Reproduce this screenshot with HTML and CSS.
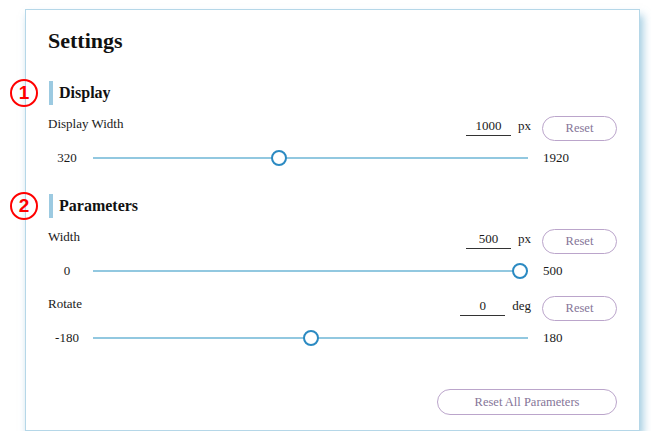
FILE: index.html
```html
<!DOCTYPE html>
<html lang="en">
<head>
    <meta charset="UTF-8">
    <meta name="viewport" content="width=device-width, initial-scale=1.0">
    <title>Settings</title>
    <link rel="stylesheet" href="styles.css">
</head>
<body>

    <div class="panel">
        <h1 class="title">Settings</h1>

        <!-- Display section -->
        <h2 class="section-title">
            <span class="marker">1</span>
            Display
        </h2>
        <div class="control-row">
            <span class="label">Display Width</span>
            <input type="text" class="value" id="displayWidthValue" value="1000">
            <span class="unit">px</span>
            <button class="reset" data-target="displayWidth">Reset</button>
        </div>
        <div class="slider-row">
            <span class="min">320</span>
            <input type="range" class="slider" id="displayWidth" min="320" max="1920" value="1000" data-default="1000">
            <span class="max">1920</span>
        </div>

        <!-- Parameters section -->
        <h2 class="section-title second">
            <span class="marker">2</span>
            Parameters
        </h2>
        <div class="control-row">
            <span class="label">Width</span>
            <input type="text" class="value" id="widthValue" value="500">
            <span class="unit">px</span>
            <button class="reset" data-target="width">Reset</button>
        </div>
        <div class="slider-row">
            <span class="min">0</span>
            <input type="range" class="slider" id="width" min="0" max="500" value="500" data-default="500">
            <span class="max">500</span>
        </div>

        <div class="control-row spaced">
            <span class="label">Rotate</span>
            <input type="text" class="value" id="rotateValue" value="0">
            <span class="unit">deg</span>
            <button class="reset" data-target="rotate">Reset</button>
        </div>
        <div class="slider-row">
            <span class="min">-180</span>
            <input type="range" class="slider" id="rotate" min="-180" max="180" value="0" data-default="0">
            <span class="max">180</span>
        </div>

        <div class="footer">
            <button class="reset reset-all" id="resetAll">Reset All Parameters</button>
        </div>
    </div>

    <script>
        // keep the text field and the slider in sync
        document.querySelectorAll(".slider").forEach(function(slider) {
            var field = document.getElementById(slider.id + "Value");
            slider.addEventListener("input", function() {
                field.value = slider.value;
            });
            field.addEventListener("change", function() {
                slider.value = field.value;
            });
        });

        // reset one slider back to its default
        document.querySelectorAll(".reset[data-target]").forEach(function(btn) {
            btn.addEventListener("click", function() {
                var slider = document.getElementById(btn.dataset.target);
                slider.value = slider.dataset.default;
                document.getElementById(slider.id + "Value").value = slider.value;
            });
        });

        // reset everything in Parameters
        document.getElementById("resetAll").addEventListener("click", function() {
            ["width", "rotate"].forEach(function(id) {
                var slider = document.getElementById(id);
                slider.value = slider.dataset.default;
                document.getElementById(id + "Value").value = slider.value;
            });
        });
    </script>
</body>
</html>
```

FILE: styles.css
```css
body {
    margin: 0;
    font-family: "Liberation Serif", "Times New Roman", serif;
    color: #1a1a1a;
    background: #fff;
}
.panel {
    margin: 9px 0 0 25px;
    width: 615px;
    height: 422px;
    box-sizing: border-box;
    padding: 17px 22px 0 22px;
    border: 1px solid #b5d7e8;
    background: #fff;
    box-shadow: 3px 6px 8px rgba(100, 170, 205, 0.6);
}
.title {
    margin: 0;
    font-size: 22px;
    line-height: 28px;
    font-weight: bold;
    color: #111;
}
/* section headings with the blue bar */
.section-title {
    position: relative;
    display: flex;
    align-items: center;
    height: 24px;
    margin: 26px 0 11px 0;
    font-size: 16px;
    line-height: 24px;
    font-weight: bold;
    color: #111;
}
.section-title::before {
    content: "";
    width: 4px;
    height: 24px;
    margin: 0 6px 0 1px;
    background: #9ccae1;
}
.section-title.second {
    margin-top: 28px;
}
/* red numbered markers sitting over the panel edge */
.marker {
    position: absolute;
    left: -38px;
    top: -2px;
    width: 28px;
    height: 28px;
    box-sizing: border-box;
    border: 2px solid #f00;
    border-radius: 50%;
    color: #f00;
    font-family: "Liberation Sans", Arial, sans-serif;
    font-size: 19px;
    font-weight: bold;
    line-height: 24px;
    text-align: center;
}
.control-row {
    display: flex;
    align-items: flex-start;
    height: 25px;
}
.control-row.spaced {
    margin-top: 17px;
}
.label {
    flex: 1;
    font-size: 13px;
    line-height: 16px;
}
.value {
    width: 45px;
    height: 19px;
    margin-top: 1px;
    padding: 0;
    box-sizing: border-box;
    border: none;
    border-bottom: 1px solid #333;
    font-family: inherit;
    font-size: 13px;
    text-align: center;
    color: #1a1a1a;
    background: transparent;
}
.unit {
    margin: 1px 11px 0 7px;
    font-size: 13px;
    line-height: 18px;
}
.reset {
    width: 75px;
    height: 25px;
    padding: 0;
    border: 1px solid #bba5cb;
    border-radius: 13px;
    background: #fff;
    color: #857598;
    font-family: inherit;
    font-size: 12.5px;
    cursor: pointer;
}
.slider-row {
    display: grid;
    grid-template-columns: 38px 435px 74px;
    column-gap: 7px;
    align-items: center;
    height: 16px;
    margin-top: 9px;
    font-size: 13px;
}
.slider-row .min {
    text-align: center;
}
.slider-row .max {
    margin-left: 8px;
}
.slider {
    -webkit-appearance: none;
    appearance: none;
    width: 435px;
    height: 16px;
    margin: 0;
    background: transparent;
}
.slider::-webkit-slider-runnable-track {
    height: 2px;
    background: #92c8e0;
}
.slider::-webkit-slider-thumb {
    -webkit-appearance: none;
    width: 16px;
    height: 16px;
    margin-top: -7px;
    box-sizing: border-box;
    border: 2px solid #2b8ac2;
    border-radius: 50%;
    background: #fff;
}
.footer {
    display: flex;
    justify-content: flex-end;
    margin-top: 43px;
}
.reset-all {
    width: 180px;
    height: 26px;
}
```
